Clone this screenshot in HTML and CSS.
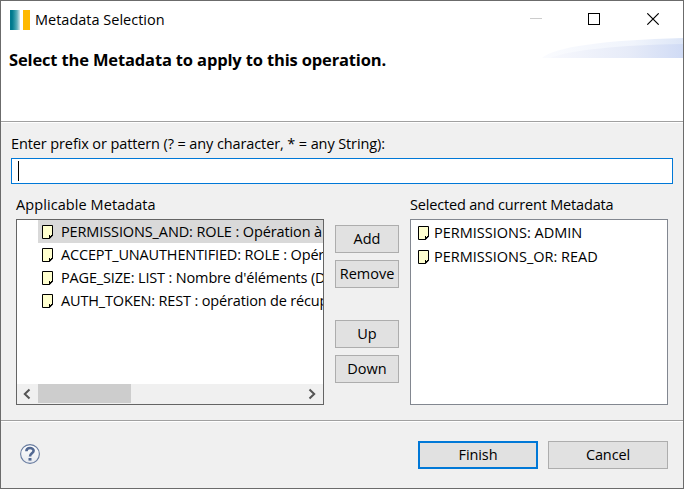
FILE: index.html
```html
<!DOCTYPE html>
<html lang="en">
<head>
<meta charset="utf-8">
<title>Metadata Selection</title>
<link rel="stylesheet" href="styles.css">
</head>
<body>
<svg width="0" height="0" class="defs">
  <symbol id="note" viewBox="0 0 11 14">
    <path d="M.5.5h10v9.500l-3.500 3.500h-6.500z" fill="#ffffcf" stroke="#000"/>
    <path d="M7 10h1v1h1v-1h1v-1h1v1.500L7.500 14H7z" fill="#000"/>
  </symbol>
</svg>
<div class="window">
  <header class="titlebar">
    <i class="logo"></i>
    <span class="title">Metadata Selection</span>
    <svg class="controls" width="130" height="12" viewBox="0 0 130 12" shape-rendering="crispEdges">
      <path d="M0 5.500h12" stroke="#ccc"/>
      <path d="M58.500.5h11v11h-11z" fill="none" stroke="#000"/>
      <path d="M117.300.3l11.400 11.400M128.700.3l-11.400 11.400" stroke="#000" stroke-width="1.100" shape-rendering="auto"/>
    </svg>
  </header>
  <section class="banner">
    <h1>Select the Metadata to apply to this operation.</h1>
    <svg class="swoosh" width="141" height="20" viewBox="0 0 141 20">
      <defs>
        <linearGradient id="g1"><stop offset="0" stop-color="#fafbfe"/><stop offset=".65" stop-color="#f0f4fc"/><stop offset="1" stop-color="#dde6f7"/></linearGradient>
        <linearGradient id="g2"><stop offset="0" stop-color="#f7f8fd"/><stop offset=".6" stop-color="#e6ebf8"/><stop offset="1" stop-color="#d0dbf5"/></linearGradient>
      </defs>
      <path d="M0 20C12 9 62 2 141 0v20z" fill="url(#g1)"/>
      <path d="M8 20C28 12 78 7 141 6v14z" fill="url(#g2)"/>
    </svg>
  </section>
  <main class="content">
    <label class="prompt">Enter prefix or pattern (? = any character, * = any String):</label>
    <div class="field"><i class="caret"></i></div>
    <div class="columns">
      <div class="left">
        <div class="caption applicable">Applicable Metadata</div>
        <div class="list tree">
          <ul>
            <li class="selected"><svg class="note"><use href="#note"/></svg><span class="entry-and">PERMISSIONS_AND: ROLE : Opération à</span></li>
            <li><svg class="note"><use href="#note"/></svg><span class="entry">ACCEPT_UNAUTHENTIFIED: ROLE : Opération</span></li>
            <li><svg class="note"><use href="#note"/></svg><span class="entry">PAGE_SIZE: LIST : Nombre d'éléments (Défaut</span></li>
            <li><svg class="note"><use href="#note"/></svg><span class="entry">AUTH_TOKEN: REST : opération de récupération</span></li>
          </ul>
          <div class="scrollbar">
            <svg width="21" height="20"><path d="M12.500 5.500L7.800 10l4.700 4.500" fill="none" stroke="#555" stroke-width="2"/></svg>
            <i class="thumb"></i>
            <svg class="end" width="21" height="20"><path d="M7.500 5.500L12.200 10l-4.700 4.500" fill="none" stroke="#555" stroke-width="2"/></svg>
          </div>
        </div>
      </div>
      <div class="actions">
        <button class="add">Add</button>
        <button class="remove">Remove</button>
        <button class="up">Up</button>
        <button class="down">Down</button>
      </div>
      <div class="right">
        <div class="caption current">Selected and current Metadata</div>
        <ul class="list picked">
          <li><svg class="note"><use href="#note"/></svg><span>PERMISSIONS: ADMIN</span></li>
          <li><svg class="note"><use href="#note"/></svg><span>PERMISSIONS_OR: READ</span></li>
        </ul>
      </div>
    </div>
  </main>
  <footer class="footer">
    <svg class="help" width="20" height="20" viewBox="0 0 20 20">
      <defs><linearGradient id="hg" x2="0" y2="1"><stop offset="0" stop-color="#fff"/><stop offset="1" stop-color="#e6e9ee"/></linearGradient></defs>
      <circle cx="10" cy="10" r="9.400" fill="url(#hg)" stroke="#677b9f" stroke-width="1.100"/>
      <path d="M6.400 7.200C6.400 3 13.600 3.200 13.600 6.800c0 2.500-3.600 2.700-3.600 5.700" fill="none" stroke="#526892" stroke-width="2.600"/>
      <path d="M8.500 14h3v2.600h-3z" fill="#526892"/>
    </svg>
    <button class="finish">Finish</button>
    <button class="cancel">Cancel</button>
  </footer>
</div>
</body>
</html>
```
FILE: styles.css
```css
* { box-sizing: border-box; }
body { margin: 0; font: 14.500px/20px "Open Sans", "Noto Sans", sans-serif; color: #000; }
ul { margin: 0; padding: 0; list-style: none; }
.defs { position: absolute; }
.window { width: 684px; height: 489px; border: 1px solid #6b6b6b; background: #f0f0f0; display: flex; flex-direction: column; overflow: hidden; white-space: nowrap; }
.titlebar { height: 37px; flex: none; background: #fff; display: flex; align-items: center; padding: 0 23px 0 9px; }
.logo { width: 20px; height: 20px; background: linear-gradient(90deg, #007a8e 0 10%, #1f8f9f 20%, #5fb0bc 35%, #c5e0e4 48%, #e2eff1 50%, #fff 52% 63%, #ffb900 63%); }
.title { margin-left: 5px; flex: 1; }
.controls { margin-top: -1px; }
.banner { height: 85px; flex: none; background: #fff; display: flex; justify-content: space-between; align-items: flex-start; border-bottom: 1px solid #fff; box-shadow: inset 0 -1px #a0a0a0; padding-left: 8px; }
h1 { margin: 10px 0 0; font-size: 16.500px; line-height: 24px; font-weight: 700; letter-spacing: -.15px; }
.content { height: 297px; flex: none; padding: 11px 10px 0; }
.prompt { display: block; height: 24px; letter-spacing: -.11px; }
.field { height: 26px; border: 1px solid #0078d7; background: #fff; padding: 2px 6px; }
.caret { display: block; width: 1px; height: 20px; background: #000; }
.columns { display: flex; padding: 11px 5px 0; }
.left { width: 308px; }
.caption { height: 24px; }
.applicable { letter-spacing: .08px; }
.current { letter-spacing: -.18px; }
.list { height: 186px; border: 1px solid #828790; background: #fff; overflow: hidden; }
.tree { border-color: #646464; display: flex; flex-direction: column; justify-content: space-between; }
.tree ul { padding-left: 21px; overflow: hidden; }
li { display: flex; align-items: center; height: 23px; padding-left: 4px; }
.entry-and { letter-spacing: -.12px; }
.entry { letter-spacing: -.16px; }
.note { width: 11px; height: 14px; flex: none; margin-right: 8px; }
.selected { background: #d9d9d9; }
.scrollbar { display: flex; height: 20px; background: #f0f0f0; }
.thumb { width: 93px; height: 19px; background: #cdcdcd; }
.end { margin-left: auto; }
.actions { width: 64px; margin: 30px 11px 0; display: flex; flex-direction: column; gap: 7px; }
button { font: inherit; color: #000; height: 28px; padding: 0; border: 1px solid #adadad; background: #e1e1e1; border-radius: 0; }
.up { margin-top: 25px; }
.right { width: 258px; }
.picked { padding: 1px 0 0 3px; }
.picked li { height: 24px; }
.picked .note { margin-right: 5px; }
.footer { flex: 1; display: flex; align-items: flex-start; padding: 21px 15px 0 19px; box-shadow: inset 0 1px #a0a0a0, inset 0 2px #fff; }
.help { margin-top: 3px; }
.footer button { width: 120px; margin-left: 10px; letter-spacing: -.1px; }
.footer .finish { border: 2px solid #0078d7; margin-left: auto; }
```
